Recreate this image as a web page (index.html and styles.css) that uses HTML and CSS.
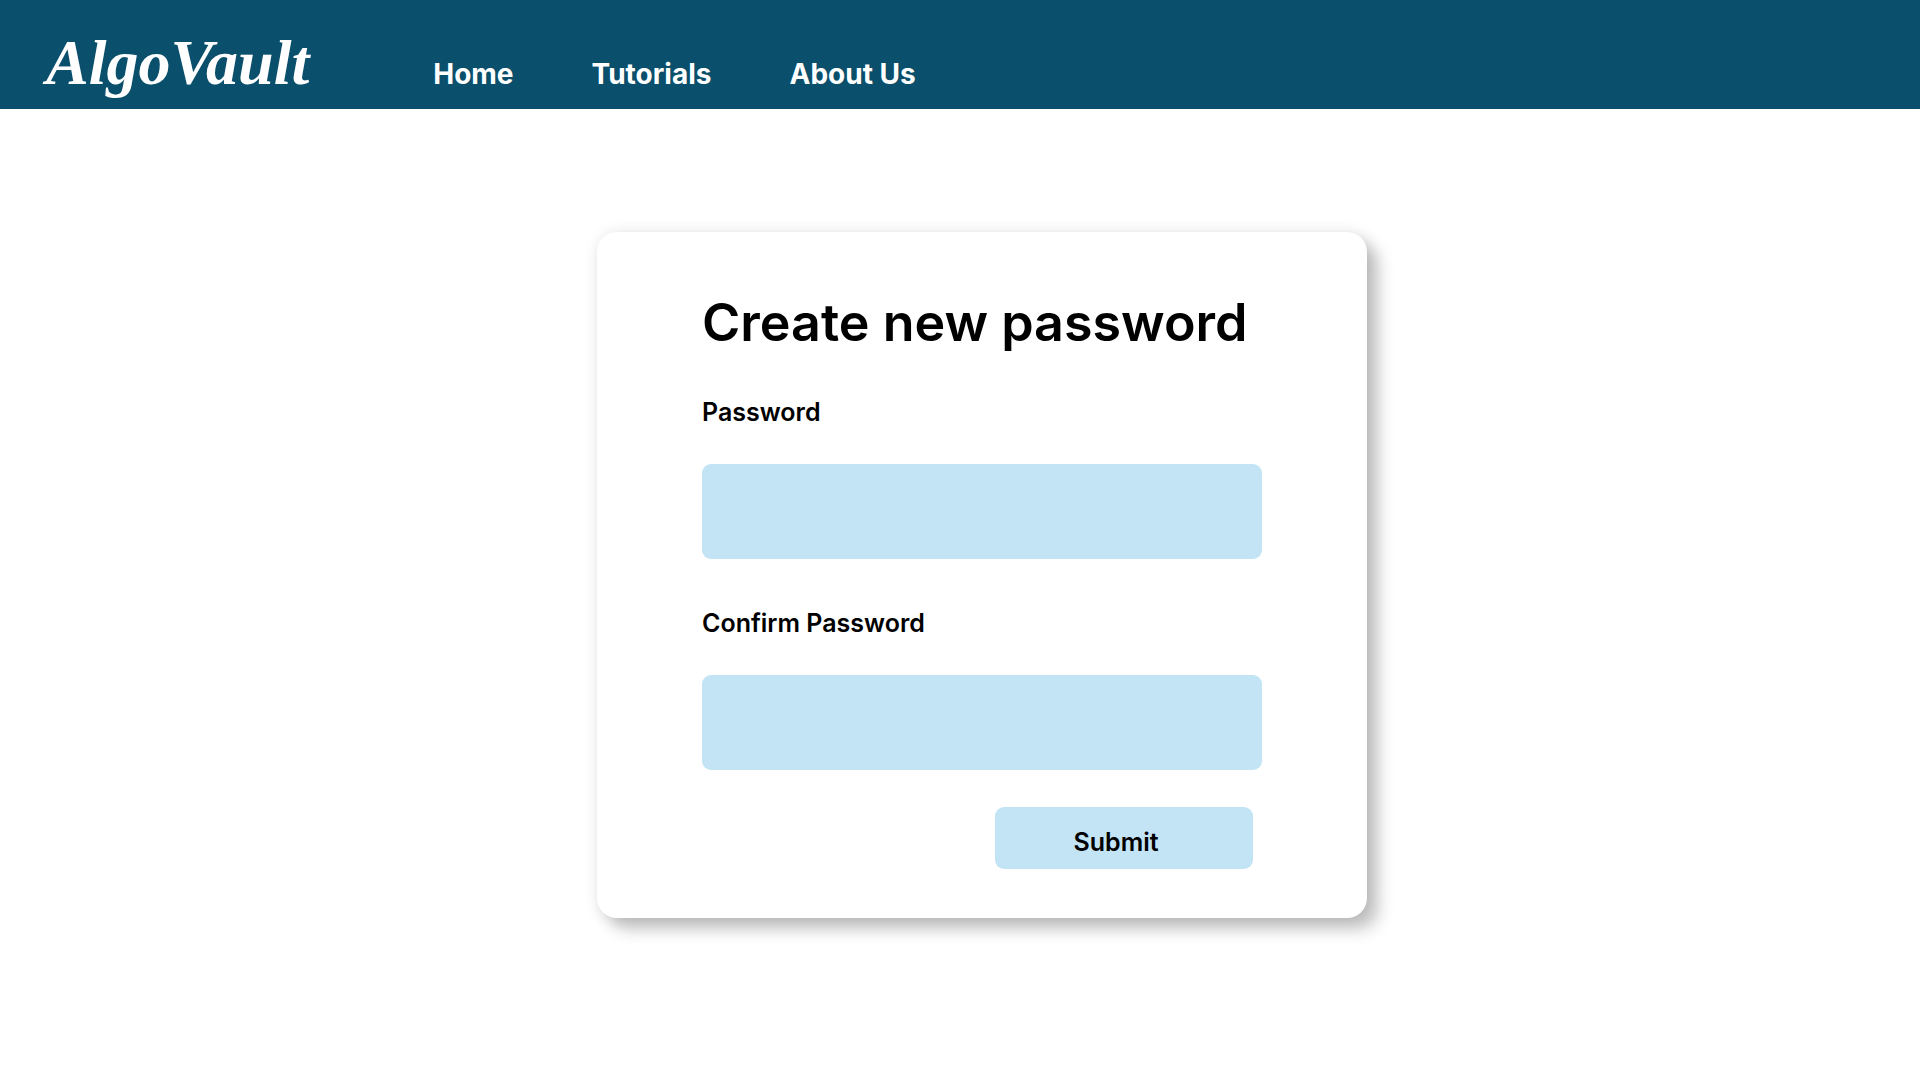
FILE: index.html
```html
<!DOCTYPE html>
<html lang="en">
<head>
<meta charset="utf-8">
<meta name="viewport" content="width=device-width, initial-scale=1">
<title>AlgoVault</title>
<link rel="stylesheet" href="styles.css">
</head>
<body>
<header class="site-header">
  <a class="logo" href="#">AlgoVault</a>
  <nav class="site-nav">
    <a href="#">Home</a>
    <a href="#">Tutorials</a>
    <a href="#">About Us</a>
  </nav>
</header>
<main class="page">
  <form class="card">
    <h1 class="card-title">Create new password</h1>
    <div class="field">
      <label for="password">Password</label>
      <input type="password" id="password">
    </div>
    <div class="field">
      <label for="confirm">Confirm Password</label>
      <input type="password" id="confirm">
    </div>
    <button class="submit" type="submit">Submit</button>
  </form>
</main>
</body>
</html>
```
FILE: styles.css
```css
* {
  box-sizing: border-box;
}

body {
  margin: 0;
  background: #fff;
  color: #000;
  font-family: Inter, "Open Sans", sans-serif;
}

.site-header {
  display: flex;
  align-items: baseline;
  gap: 124px;
  min-height: 109px;
  padding: 27px 46px 0;
  background: #0a4f6b;
}

.site-header a {
  color: #fff;
  text-decoration: none;
}

.logo {
  font: italic bold 64px/72px "Liberation Serif", serif;
}

.site-nav {
  display: flex;
  flex-wrap: wrap;
  gap: 78px;
  font-size: 28px;
  font-weight: 700;
  line-height: 36px;
}

.page {
  display: flex;
  justify-content: center;
  padding: 123px 0 40px 44px;
}

.card {
  display: flex;
  flex-direction: column;
  width: 100%;
  max-width: 770px;
  padding: 59px 105px 49px;
  border-radius: 20px;
  background: #fff;
  box-shadow: 12px 12px 16px rgba(0, 0, 0, 0.2), 2px 2px 16px rgba(0, 0, 0, 0.14);
}

.card-title {
  margin: 0 0 39px;
  font-size: 52px;
  font-weight: 600;
  line-height: 64px;
}

.field {
  display: flex;
  flex-direction: column;
  gap: 34px;
}

.field + .field {
  margin-top: 46px;
}

.field label {
  font-size: 25px;
  font-weight: 600;
  line-height: 36px;
}

.field input {
  width: 100%;
  height: 95px;
  padding: 0 24px;
  border: 0;
  border-radius: 9px;
  background: #c3e4f4;
  font: inherit;
  font-size: 25px;
}

.submit {
  align-self: flex-end;
  width: 258px;
  height: 62px;
  margin: 37px 9px 0 0;
  padding: 7px 16px 0 0;
  border: 0;
  border-radius: 9px;
  background: #c3e4f4;
  color: #000;
  font: inherit;
  font-size: 25px;
  font-weight: 600;
}
```
